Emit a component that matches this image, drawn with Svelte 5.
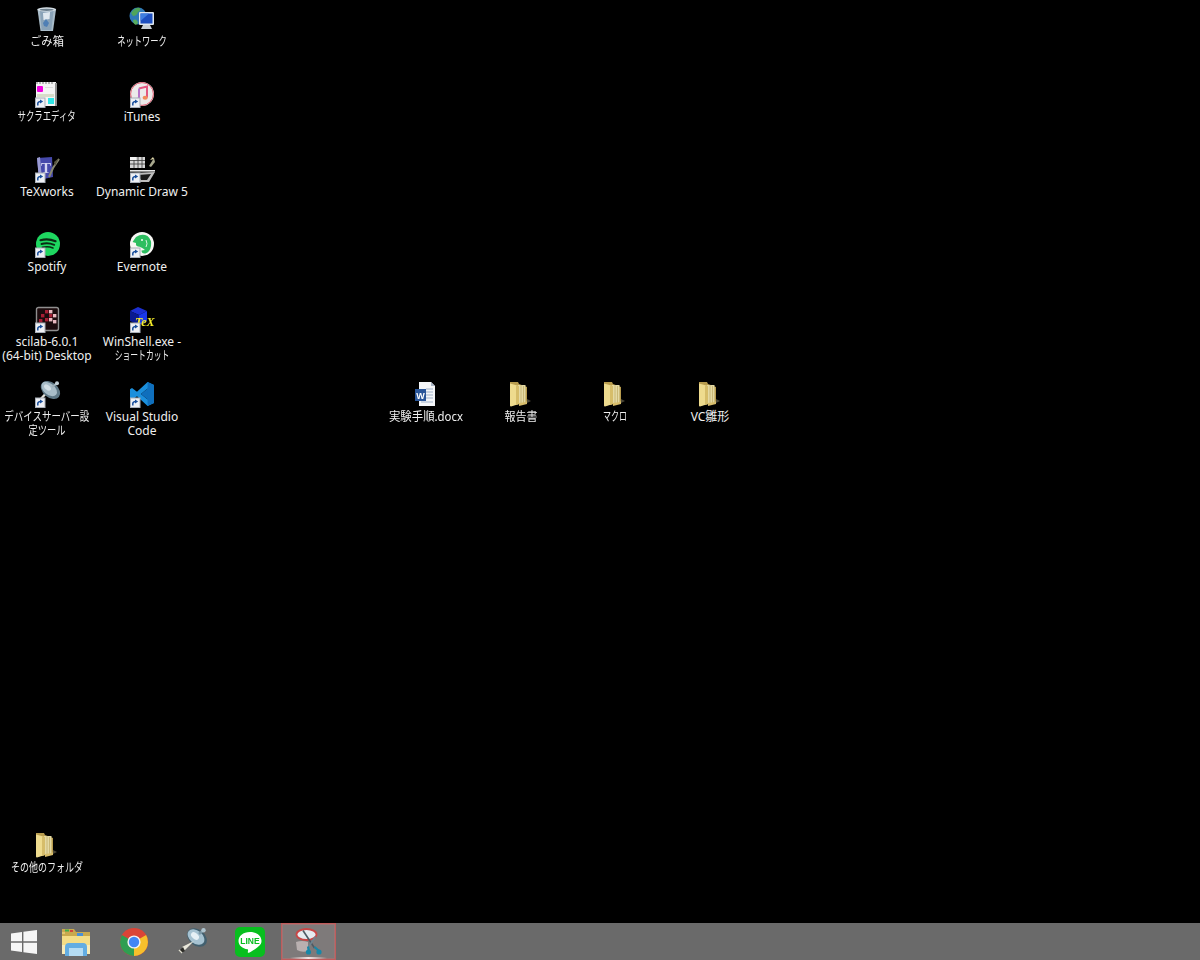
<script lang="ts">
	type Item = { label: string; x: number; y: number; icon: string; link?: boolean; fit?: number[] };

	const colA = 0;
	const colB = 95;
	const row = (n: number) => 6 + n * 75;

	// fit narrows the kana lines, the installed CJK face is wider than the screenshot's
	const items: Item[] = [
		{ label: 'ごみ箱', x: colA, y: row(0), icon: 'trash', fit: [0.94] },
		{ label: 'ネットワーク', x: colB, y: row(0), icon: 'network', fit: [0.69] },
		{ label: 'サクラエディタ', x: colA, y: row(1), icon: 'sakura', link: true, fit: [0.7] },
		{ label: 'iTunes', x: colB, y: row(1), icon: 'itunes', link: true },
		{ label: 'TeXworks', x: colA, y: row(2), icon: 'texworks', link: true },
		{ label: 'Dynamic Draw 5', x: colB, y: row(2), icon: 'draw', link: true },
		{ label: 'Spotify', x: colA, y: row(3), icon: 'spotify', link: true },
		{ label: 'Evernote', x: colB, y: row(3), icon: 'evernote', link: true },
		{ label: 'scilab-6.0.1\n(64-bit) Desktop', x: colA, y: row(4), icon: 'scilab', link: true },
		{ label: 'WinShell.exe -\nショートカット', x: colB, y: row(4), icon: 'winshell', link: true, fit: [1, 0.65] },
		{ label: 'デバイスサーバー設\n定ツール', x: colA, y: row(5), icon: 'dish', link: true, fit: [0.79, 0.77] },
		{ label: 'Visual Studio\nCode', x: colB, y: row(5), icon: 'vscode', link: true },
		{ label: '実験手順.docx', x: 379, y: row(5), icon: 'word', fit: [0.95] },
		{ label: '報告書', x: 474, y: row(5), icon: 'folder', fit: [0.92] },
		{ label: 'マクロ', x: 568, y: row(5), icon: 'folder', fit: [0.67] },
		{ label: 'VC雛形', x: 663, y: row(5), icon: 'folder' },
		{ label: 'その他のフォルダ', x: 0, y: 832, icon: 'folder', fit: [0.75] }
	];
</script>

{#snippet desktopIcon(kind: string)}
	{#if kind === 'trash'}
		<path d="M3.5 3.5 L22 3.5 L19 25 L6.5 25 Z" fill="#a9bcc9" />
		<path d="M6 5 L19.5 5 L17.4 24 L7.6 24 Z" fill="#8aa3b8" />
		<path d="M9 7 L16 6 L15.5 13 L9.5 14 Z" fill="#dfe8ef" />
		<path d="M9 17 L12 13 L15 17 L13 21 L10 20 Z" fill="#4f7fb5" />
		<ellipse cx="12.7" cy="3.5" rx="9.5" ry="2.2" fill="#d5dfe6" />
		<ellipse cx="12.7" cy="3.8" rx="7" ry="1.1" fill="#6c7f8d" />
	{:else if kind === 'network'}
		<circle cx="9" cy="10" r="8.5" fill="#2f79b8" />
		<path d="M2 7 Q6 1 11 2 Q12 5 9 6 Q8 10 4 10 Z" fill="#4fa55a" />
		<path d="M4 14 Q8 12 9 17 L7 19 Q4 18 4 14 Z" fill="#58ad5e" />
		<rect x="10" y="6" width="15" height="13" rx="1" fill="#dfe7ee" />
		<rect x="11.5" y="7.5" width="12" height="10" fill="#1d4fc0" />
		<path d="M11.5 7.5 H20 L11.5 15 Z" fill="#3f7ee0" />
		<path d="M14 19 H21 L23 23 H12 Z" fill="#c9d0d6" />
	{:else if kind === 'sakura'}
		<rect x="2" y="1" width="20" height="24" fill="#f4f4f4" />
		<rect x="21" y="2" width="2" height="23" fill="#8e8e8e" />
		<path d="M3 1 V3 M6 1 V3 M9 1 V3 M12 1 V3 M15 1 V3 M18 1 V3" stroke="#777" stroke-width="1" />
		<rect x="3" y="5" width="6" height="6" rx="1" fill="#f000e0" />
		<rect x="11" y="6" width="8" height="1" fill="#ddd" />
		<rect x="3" y="13" width="17" height="3" fill="#d8dcc8" />
		<rect x="14" y="17" width="6" height="6" fill="#30e6e6" />
	{:else if kind === 'itunes'}
		<circle cx="13" cy="13" r="12" fill="#eceaea" />
		<circle cx="13" cy="13" r="11.4" fill="none" stroke="#e05a70" stroke-width="1" />
		<path d="M10 7.5 L18 5.5 V16.5" fill="none" stroke="#e2557f" stroke-width="2" />
		<path d="M10 7.5 V18.5" fill="none" stroke="#b673c9" stroke-width="2" />
		<ellipse cx="8.4" cy="18.8" rx="2.6" ry="2" fill="#6f93d8" />
		<ellipse cx="16.2" cy="16.8" rx="2.6" ry="2" fill="#f08a5a" />
	{:else if kind === 'texworks'}
		<path d="M3 2 L18 1 L19 21 L5 24 Z" fill="#4649ab" />
		<path d="M3 2 L6 1 L8 23 L5 24 Z" fill="#9a9bd2" />
		<text x="7" y="17" class="tex-t">T</text>
		<path d="M25 3 L19 12 L15 21" fill="none" stroke="#8a8a72" stroke-width="2" />
		<path d="M25 2 L20 6 L21 10 Z" fill="#55533f" />
	{:else if kind === 'draw'}
		<rect x="1" y="1" width="15" height="11" fill="#d6d6d6" />
		<path d="M1 4.5 H16 M1 8 H16 M5 1 V12 M9 1 V12 M13 1 V12" stroke="#3a3a3a" stroke-width="0.8" />
		<rect x="1" y="1" width="6" height="3" fill="#f2f2f2" />
		<path d="M20 10 L25 2 L26 6 L22 11 Z" fill="#a8a88e" />
		<path d="M21 4 L24 1 L25 3 Z" fill="#e8e0b0" />
		<rect x="1" y="14" width="25" height="1.6" fill="#e8e8e8" />
		<path d="M4 17 L26 16 L20 26 L10 26 Z" fill="#bdbdbd" />
		<path d="M9 19 L22 18 L18 24 L12 24 Z" fill="#1a1a1a" />
	{:else if kind === 'spotify'}
		<circle cx="14" cy="13" r="12" fill="#1ed760" />
		<g fill="none" stroke="#0b2a14" stroke-linecap="round">
			<path d="M6.5 9.2 Q14 7 21.5 10.2" stroke-width="2.2" />
			<path d="M7.5 13 Q14 11.2 20.2 13.8" stroke-width="1.9" />
			<path d="M8.4 16.4 Q14 15 19 17" stroke-width="1.6" />
		</g>
	{:else if kind === 'evernote'}
		<circle cx="13" cy="13" r="12" fill="#f7f7f4" />
		<path d="M7 6 Q13 2 18.5 5 Q23 9 22 15 Q21 21 16.5 22.5 Q12.5 23 12.5 19.5 L16 19 Q12 15.5 9 15.5 Q6.5 15 7 12 L3.5 11 Z" fill="#2dbe60" />
		<circle cx="13" cy="9" r="1" fill="#f7f7f4" />
		<path d="M17 9 Q19 13 17 16" fill="none" stroke="#d8f5e2" stroke-width="1" />
	{:else if kind === 'scilab'}
		<rect x="2.5" y="1.5" width="22" height="23" rx="2" fill="#1c0b0d" stroke="#8f8f8f" stroke-width="1.4" />
		<g fill="#a81f35">
			<rect x="11" y="4" width="3.4" height="3.4" />
			<rect x="7" y="8" width="3.4" height="3.4" />
			<rect x="15" y="8" width="3.4" height="3.4" />
			<rect x="11" y="12" width="3.4" height="3.4" />
			<rect x="5" y="13" width="3.4" height="3.4" />
		</g>
		<g fill="#e9b9c0">
			<rect x="15" y="4" width="3.4" height="3.4" />
			<rect x="19" y="8" width="3.4" height="3.4" />
			<rect x="15" y="12" width="3.4" height="3.4" />
			<rect x="19" y="14" width="3.4" height="3.4" />
		</g>
	{:else if kind === 'winshell'}
		<path d="M9 1 L18 5 L10 9 L1 5 Z" fill="#1c2fd0" />
		<path d="M1 5 L10 9 L10 19 L1 15 Z" fill="#0a1a90" />
		<path d="M10 9 L18 5 L18 15 L10 19 Z" fill="#1a38e8" />
		<text x="6" y="19.5" class="tex-logo">TeX</text>
	{:else if kind === 'dish'}
		<path d="M15 9 L5 20" stroke="#e3e3dc" stroke-width="2.4" />
		<ellipse cx="16.5" cy="9" rx="11" ry="7.5" transform="rotate(40 16.5 9)" fill="#5f7886" />
		<ellipse cx="15.2" cy="8" rx="9" ry="5.6" transform="rotate(40 15.2 8)" fill="#a9bdc8" />
		<ellipse cx="13.5" cy="6.5" rx="4" ry="2.4" transform="rotate(40 13.5 6.5)" fill="#d4e0e6" />
		<path d="M18 6 L22.5 2.5" stroke="#9fb0b9" stroke-width="2" />
		<circle cx="23" cy="2.2" r="2" fill="#c2cfd6" />
	{:else if kind === 'vscode'}
		<path d="M18.6 1 L25 4 V22 L18.6 25 L8 15.2 L3 19 L1 17.8 V8.2 L3 7 L8 10.8 Z M18.6 7.6 L12 13 L18.6 18.4 Z" fill="#1b8fdc" fill-rule="evenodd" />
		<path d="M18.6 1 L25 4 V22 L18.6 25 Z M18.6 7.6 V18.4 L12 13 Z" fill="#0f6fbd" fill-rule="evenodd" />
	{:else if kind === 'word'}
		<path d="M6 1 H18 L22 5 V25 H6 Z" fill="#f4f6f9" />
		<path d="M18 1 L22 5 H18 Z" fill="#aab6c6" />
		<path d="M13 8 H20 M13 11 H20 M13 14 H20 M13 17 H20 M8 21 H20" stroke="#9fb0c8" stroke-width="1" />
		<rect x="2" y="8" width="11" height="12" fill="#2a5699" />
		<text x="7.5" y="17.5" class="word-w">W</text>
	{:else if kind === 'folder'}
		<path d="M2 1 L10 1 L11 3 L19 6 L19 21 L2 25 Z" fill="#b89c4e" />
		<rect x="10" y="4" width="7.5" height="18" fill="#e4d9a4" />
		<path d="M13 4 V22 M15.5 5 V22" stroke="#c2b06c" stroke-width="0.8" />
		<path d="M2 2.5 L11 5 L11 23 L3 25.5 Q2 25.5 2 24 Z" fill="#eedb8e" />
		<path d="M8 4.5 L11 5 L11 23 L8 24 Z" fill="#d6bd6a" />
		<path d="M11 22 L18 21 L19 20 L19 23 L11 25 Z" fill="#d9be6c" />
		<path d="M19 18 L23 20 L19 22 Z" fill="#4a4636" />
	{/if}
{/snippet}

<main class="screen">
	<section class="desktop">
		{#each items as item}
			<div class="item" style={`left:${item.x}px;top:${item.y}px`}>
				<svg class="item-icon" viewBox="0 0 26 26" aria-hidden="true">
					{@render desktopIcon(item.icon)}
					{#if item.link}
						<rect x="1" y="16.5" width="10.5" height="10.5" fill="#a9afb8" />
						<rect x="2" y="17.5" width="8.5" height="8.5" fill="#eef0f4" />
						<path d="M3.8 24.4 V22.4 Q4 20.4 6.8 20.4" fill="none" stroke="#1a4f9c" stroke-width="1.5" />
						<path d="M6 18.4 L9.2 20.4 L6 22.4 Z" fill="#1a4f9c" />
					{/if}
				</svg>
				<span class="item-label">
					{#each item.label.split('\n') as line, i}
						<span class="label-line" style={`transform:scaleX(${item.fit?.[i] ?? 1})`}>{line}</span>
					{/each}
				</span>
			</div>
		{/each}
	</section>

	<footer class="taskbar">
		<button class="start" aria-label="Start">
			<svg viewBox="0 0 26 24" aria-hidden="true">
				<path d="M0 3.5 L11 2 V11.3 H0 Z M12.4 1.8 L26 0 V11.3 H12.4 Z M0 12.7 H11 V22 L0 20.5 Z M12.4 12.7 H26 V24 L12.4 22.2 Z" fill="#f6f6f6" />
			</svg>
		</button>

		<button class="task" aria-label="Explorer">
			<svg class="explorer" viewBox="0 0 30 28" aria-hidden="true">
				<path d="M1 1 H13 L15 4 H29 V26 H1 Z" fill="#c9a94e" />
				<rect x="4" y="1.5" width="4" height="2" fill="#3fae4a" />
				<rect x="9" y="2" width="3" height="2" fill="#d6453c" />
				<rect x="16" y="5" width="6" height="3" fill="#4a90d9" />
				<rect x="1" y="4" width="3" height="2" fill="#e2c66e" />
				<path d="M1 8 H29 V26 H1 Z" fill="#f4dd86" />
				<path d="M1 17 H29 V26 H1 Z" fill="#f8ebb8" />
				<path d="M4 19 Q4 15 8 15 H22 Q26 15 26 19 V28 H22 V20 H8 V28 H4 Z" fill="#63ade2" />
				<rect x="8" y="20" width="14" height="8" fill="#b5dcf3" />
			</svg>
		</button>

		<button class="task" aria-label="Chrome">
			<svg class="chrome" viewBox="0 0 28 28" aria-hidden="true">
				<circle cx="14" cy="14" r="14" fill="#db4437" />
				<path d="M14 14 L26.1 7 A14 14 0 0 1 14 28 Z" fill="#f6c02c" />
				<path d="M14 14 L14 28 A14 14 0 0 1 1.9 7 Z" fill="#2f9e52" />
				<circle cx="14" cy="14" r="6.6" fill="#f3f3f3" />
				<circle cx="14" cy="14" r="5.2" fill="#4285f4" />
			</svg>
		</button>

		<button class="task" aria-label="Device server">
			<svg class="sat" viewBox="0 0 30 28" aria-hidden="true">
				<ellipse cx="20" cy="9.5" rx="11" ry="8" transform="rotate(40 20 9.5)" fill="#42606f" />
				<ellipse cx="19" cy="9" rx="9.5" ry="6.4" transform="rotate(40 19 9)" fill="#a6c2d1" />
				<ellipse cx="18" cy="8" rx="4.5" ry="3" transform="rotate(40 18 8)" fill="#e6f0f5" />
				<path d="M22 6 L26 2.5" stroke="#7b97a6" stroke-width="2.4" />
				<circle cx="26.5" cy="2.2" r="2.2" fill="#aec4cf" />
				<path d="M17 13 L5 19 L7 23 Z" fill="#e9e7da" />
				<path d="M6 19 L2 23 L4 25 L8 23 Z" fill="#2d2c28" />
				<path d="M2 22 L5 25" stroke="#e0ded0" stroke-width="1.4" />
			</svg>
		</button>

		<button class="task" aria-label="LINE">
			<svg class="line" viewBox="0 0 30 30" aria-hidden="true">
				<rect width="30" height="30" rx="5" fill="#08bf1f" />
				<path d="M15 5 C8 5 3.5 9 3.5 14 C3.5 18.5 7.5 21.5 12.5 22.3 C13.5 22.6 13 24 12.8 25 C12.7 26 13.5 26 14.5 25.5 C17 24 24 20 25.8 17 C26.3 16 26.5 15 26.5 14 C26.5 9 22 5 15 5 Z" fill="#fff" />
				<text x="15" y="17" class="line-text">LINE</text>
			</svg>
		</button>

		<button class="task task--active" aria-label="Snipping Tool">
			<svg class="snip" viewBox="0 0 30 28" aria-hidden="true">
				<path d="M2 14 Q8 12 14 14 L14 23 Q8 25 3 22 Z" fill="#b9b0b0" />
				<ellipse cx="12.5" cy="6.5" rx="10" ry="5.5" fill="#e6ebf0" stroke="#c94646" stroke-width="1.8" />
				<path d="M9 2.5 L20.5 20" stroke="#4d5a64" stroke-width="1.6" />
				<path d="M21.5 8.5 L14.5 19" stroke="#6f8490" stroke-width="1.6" />
				<path d="M14 18.5 L15 24 M20.5 19 L25 23" stroke="#1787a8" stroke-width="2.2" />
				<circle cx="14.5" cy="24" r="2.6" fill="#1787a8" />
				<circle cx="25" cy="24" r="2.6" fill="#1787a8" />
			</svg>
		</button>
	</footer>
</main>

<style>
	:global(body) {
		margin: 0;
		background: #000;
	}

	.screen {
		display: flex;
		flex-direction: column;
		width: 1200px;
		height: 960px;
		overflow: hidden;
		background: #000;
		font-family: "Noto Sans", "Noto Sans CJK JP", sans-serif;
	}

	.desktop {
		position: relative;
		flex: 1;
	}

	.item {
		position: absolute;
		display: flex;
		flex-direction: column;
		align-items: center;
		width: 94px;
	}

	.item-icon {
		width: 26px;
		height: 26px;
		overflow: visible;
		filter: blur(0.3px);
	}

	.item-label {
		display: flex;
		flex-direction: column;
		align-items: center;
		margin-top: 3px;
		color: #efefef;
		font-size: 12px;
		line-height: 14px;
		white-space: nowrap;
	}

	.label-line {
		display: block;
	}

	.tex-t {
		fill: #d4d4f2;
		font: 700 15px "Liberation Serif", serif;
	}

	.tex-logo {
		fill: #f7ee2a;
		font: italic 700 12px "Liberation Serif", serif;
	}

	.word-w {
		fill: #fff;
		font: 700 9px "Liberation Sans", sans-serif;
		text-anchor: middle;
	}

	.line-text {
		fill: #08bf1f;
		font: 700 8.5px "Liberation Sans", sans-serif;
		text-anchor: middle;
	}

	.taskbar {
		display: flex;
		flex: none;
		align-items: stretch;
		height: 37px;
		background: #6a6a6a;
	}

	.start,
	.task {
		display: flex;
		align-items: center;
		justify-content: center;
		padding: 0;
		border: 0;
		background: transparent;
	}

	.start {
		width: 47px;
	}

	.start svg {
		width: 26px;
		height: 24px;
	}

	.task {
		position: relative;
		width: 58px;
	}

	.task svg {
		filter: blur(0.3px);
	}

	.explorer {
		width: 30px;
		height: 28px;
	}

	.chrome {
		width: 28px;
		height: 28px;
	}

	.sat {
		width: 30px;
		height: 28px;
	}

	.line {
		width: 30px;
		height: 30px;
	}

	.snip {
		width: 30px;
		height: 28px;
	}

	.task--active {
		width: 55px;
		margin-left: 2px;
		border: 1px solid #bf5c5c;
		box-shadow: inset 0 0 0 1px rgba(190, 110, 110, 0.5);
		background: #7e7a7a;
		box-sizing: border-box;
	}

	.task--active::after {
		content: "";
		position: absolute;
		left: 8px;
		right: 8px;
		bottom: 0;
		height: 2px;
		background: linear-gradient(90deg, transparent, #f4e6e6, transparent);
	}
</style>
